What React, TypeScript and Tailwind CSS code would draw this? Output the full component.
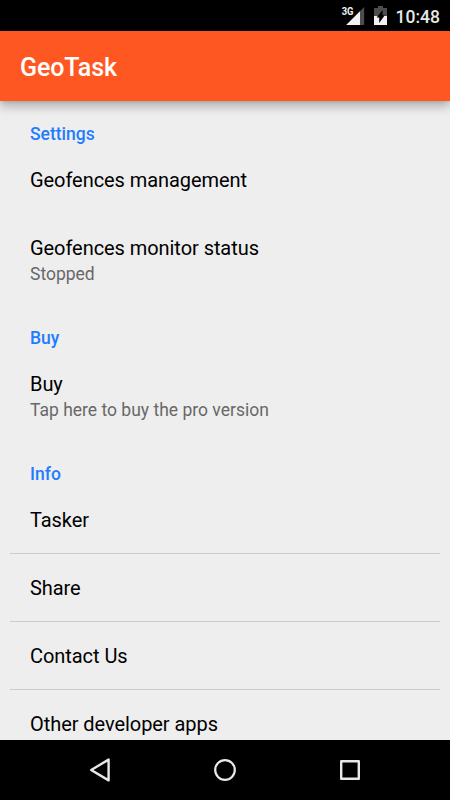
type Preference = {
  title: string;
  summary?: string;
};

type Section = {
  name: string;
  divided?: boolean;
  items: Preference[];
};

const sections: Section[] = [
  {
    name: "Settings",
    items: [
      { title: "Geofences management" },
      { title: "Geofences monitor status", summary: "Stopped" },
    ],
  },
  {
    name: "Buy",
    items: [{ title: "Buy", summary: "Tap here to buy the pro version" }],
  },
  {
    name: "Info",
    divided: true,
    items: [
      { title: "Tasker" },
      { title: "Share" },
      { title: "Contact Us" },
      { title: "Other developer apps" },
    ],
  },
];

function StatusBar() {
  return (
    <div className="flex h-[31px] shrink-0 items-center justify-end bg-black pr-[10px] text-white">
      {/* Signal */}
      <svg width="24" height="31" viewBox="0 0 24 31" className="mr-[9px]">
        <path d="M23.2 7v18H5.2z" fill="#4d4d4d" />
        <path d="M19 11.2V25H5.2z" fill="#f2f2f2" />
        <path d="M0 7h13v9H0z" fill="#000" />
        <text x="0.7" y="15" fontSize="10.5" fontWeight="700" fill="#f2f2f2" textLength="11.8" lengthAdjust="spacingAndGlyphs">
          3G
        </text>
      </svg>
      {/* Battery */}
      <svg width="13" height="31" viewBox="0 0 13 31" className="mr-[9px]">
        <path d="M4 6h5v2h4v8H0V8h4z" fill="#4d4d4d" />
        <path d="M0 16h13v9H0z" fill="#f2f2f2" />
        <path d="M8.6 10v5.2h2.2L5.2 23v-5.6H2.6z" fill="#000" />
      </svg>
      <span className="relative top-[2px] text-[17.5px] leading-none font-medium text-[#e8e8e8]">10:48</span>
    </div>
  );
}

function PreferenceRow({ title, summary }: Preference) {
  return (
    <div className={`px-5 pt-[22px] ${summary ? "h-[92px]" : "h-[68px]"}`}>
      <div className="text-[20px] leading-6 tracking-[-0.06px] text-black">{title}</div>
      {summary && <div className="pt-[3px] text-[17.5px] leading-[22px] text-[#686868]">{summary}</div>}
    </div>
  );
}

function NavBar() {
  return (
    <div className="flex h-[60px] shrink-0 items-center justify-center gap-[95px] bg-black">
      <svg width="30" height="30" viewBox="0 0 30 30" fill="none" stroke="#e8e8e8" strokeWidth="2.4" strokeLinejoin="round">
        <path d="M23.6 4.6v20.8L6.2 15z" />
      </svg>
      <svg width="30" height="30" viewBox="0 0 30 30" fill="none" stroke="#e8e8e8" strokeWidth="2.2">
        <circle cx="15" cy="15" r="9.8" />
      </svg>
      <svg width="30" height="30" viewBox="0 0 30 30" fill="none" stroke="#e8e8e8" strokeWidth="2.4" strokeLinejoin="round">
        <path d="M6.2 6.2h17.6v17.6H6.2z" />
      </svg>
    </div>
  );
}

export default function App() {
  return (
    <div className="flex h-[800px] w-[450px] flex-col overflow-hidden bg-[#eeeeee] font-['Roboto',sans-serif]">
      <StatusBar />
      <header className="z-10 flex h-[70px] shrink-0 items-center bg-[#ff5722] px-5 pt-[3px] shadow-[0_5px_10px_rgba(0,0,0,0.28),0_0_3px_rgba(0,0,0,0.15)]">
        <h1 className="text-[25px] leading-none font-medium tracking-[-0.1px] text-white">GeoTask</h1>
      </header>

      <main className="min-h-0 flex-1 overflow-hidden px-[10px] pt-px">
        {sections.map((section) => (
          <section key={section.name}>
            <h2 className="h-11 px-5 pt-[22px] text-[17.5px] leading-5 font-medium text-[#1f7cff]">{section.name}</h2>
            <div className={section.divided ? "[&>*:not(:last-child)]:shadow-[inset_0_-1px_#cbcbcb]" : ""}>
              {section.items.map((item) => (
                <PreferenceRow key={item.title} {...item} />
              ))}
            </div>
          </section>
        ))}
      </main>

      <NavBar />
    </div>
  );
}
